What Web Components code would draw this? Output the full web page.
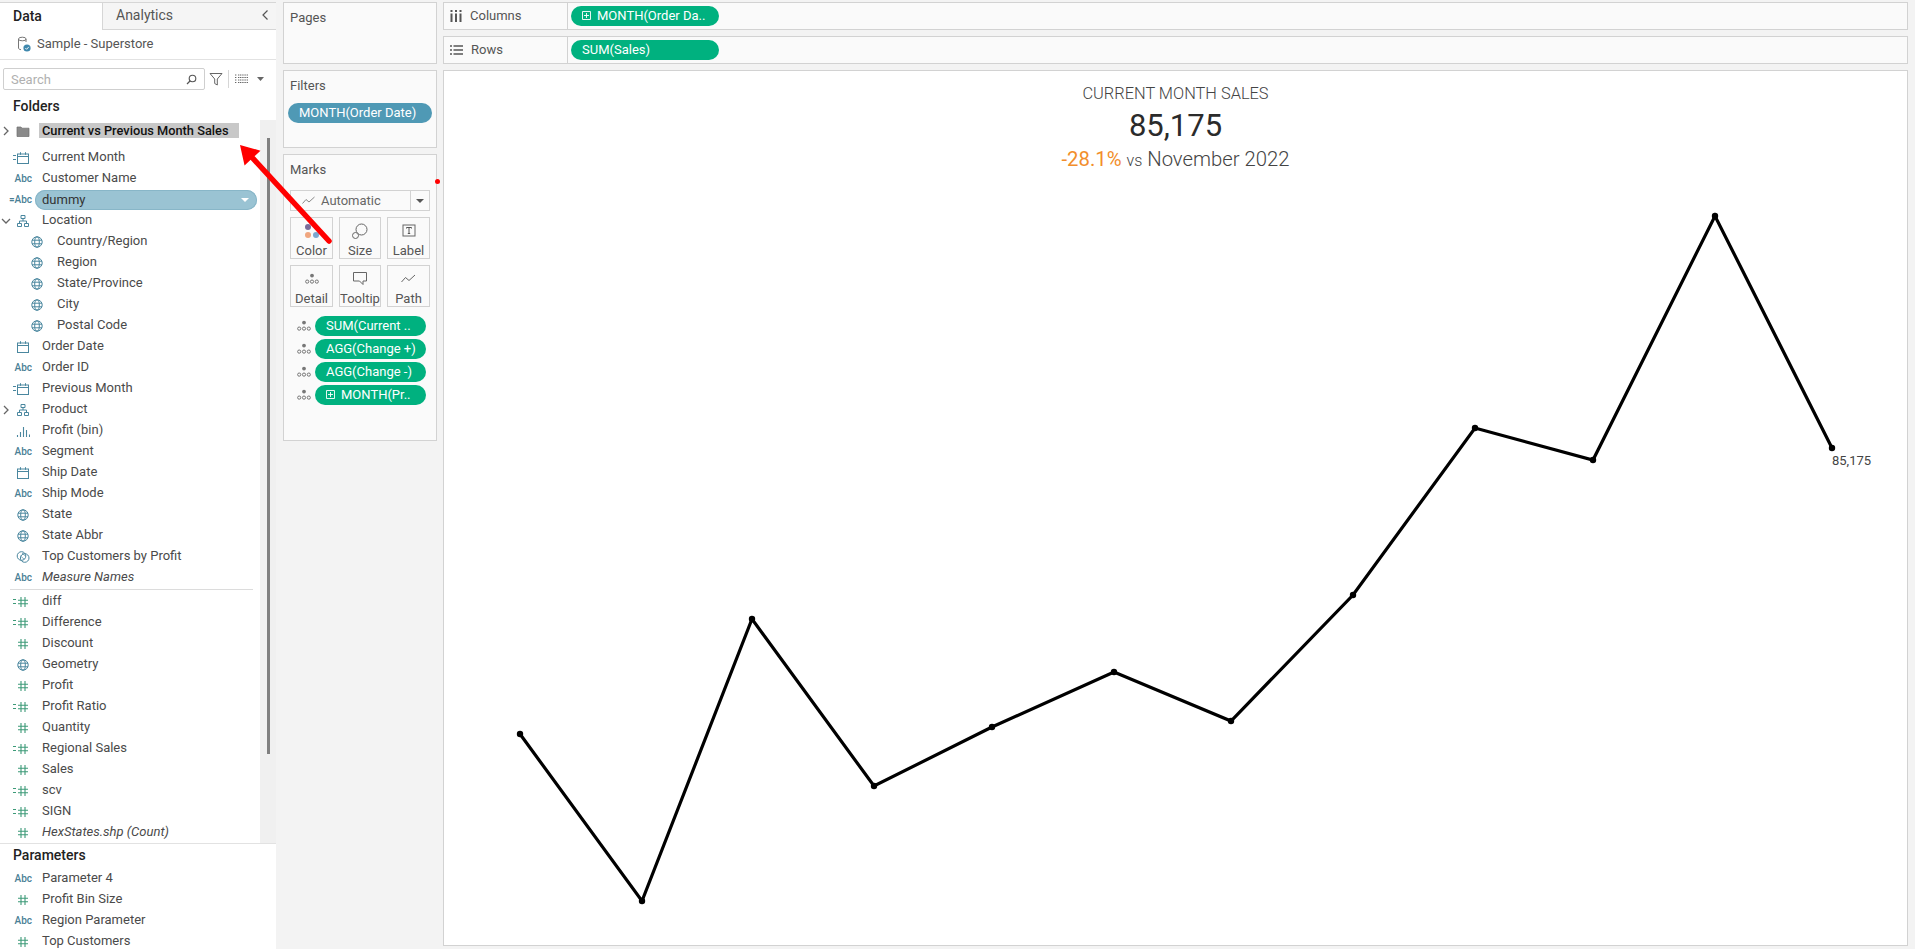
<!DOCTYPE html>
<html>
<head>
<meta charset="utf-8">
<title>Current Month Sales</title>
<style>
  html, body { margin: 0; height: 949px; overflow: hidden; background: #f3f3f3; }
  body { font-family: Roboto, "Liberation Sans", sans-serif; font-size: 13px; color: #444; }
</style>
</head>
<body>
<tb-app>
  <data-pane slot="data">
    <field-row slot="folder" kind="folder" expander="closed" folder>Current vs Previous Month Sales</field-row>

    <field-row kind="calendar" calc>Current Month</field-row>
    <field-row kind="abc">Customer Name</field-row>
    <field-row kind="abc" calc pill>dummy</field-row>
    <field-row kind="hier" expander="open">Location</field-row>
    <field-row kind="globe" indent>Country/Region</field-row>
    <field-row kind="globe" indent>Region</field-row>
    <field-row kind="globe" indent>State/Province</field-row>
    <field-row kind="globe" indent>City</field-row>
    <field-row kind="globe" indent>Postal Code</field-row>
    <field-row kind="calendar">Order Date</field-row>
    <field-row kind="abc">Order ID</field-row>
    <field-row kind="calendar" calc>Previous Month</field-row>
    <field-row kind="hier" expander="closed">Product</field-row>
    <field-row kind="bars">Profit (bin)</field-row>
    <field-row kind="abc">Segment</field-row>
    <field-row kind="calendar">Ship Date</field-row>
    <field-row kind="abc">Ship Mode</field-row>
    <field-row kind="globe">State</field-row>
    <field-row kind="globe">State Abbr</field-row>
    <field-row kind="set">Top Customers by Profit</field-row>
    <field-row kind="abc" italic>Measure Names</field-row>
    <pane-rule></pane-rule>
    <field-row kind="hash" calc>diff</field-row>
    <field-row kind="hash" calc>Difference</field-row>
    <field-row kind="hash">Discount</field-row>
    <field-row kind="globe">Geometry</field-row>
    <field-row kind="hash">Profit</field-row>
    <field-row kind="hash" calc>Profit Ratio</field-row>
    <field-row kind="hash">Quantity</field-row>
    <field-row kind="hash" calc>Regional Sales</field-row>
    <field-row kind="hash">Sales</field-row>
    <field-row kind="hash" calc>scv</field-row>
    <field-row kind="hash" calc>SIGN</field-row>
    <field-row kind="hash" italic>HexStates.shp (Count)</field-row>

    <field-row slot="params" kind="abc">Parameter 4</field-row>
    <field-row slot="params" kind="hash">Profit Bin Size</field-row>
    <field-row slot="params" kind="abc">Region Parameter</field-row>
    <field-row slot="params" kind="hash">Top Customers</field-row>
  </data-pane>

  <shelf-card slot="cards" label="Pages" style="height:62px"></shelf-card>
  <shelf-card slot="cards" label="Filters" style="height:78px">
    <viz-pill color="blue" width="144">MONTH(Order Date)</viz-pill>
  </shelf-card>
  <marks-card slot="cards"></marks-card>

  <shelf-row slot="shelves" label="Columns" kind="columns">
    <viz-pill plus width="148">MONTH(Order Da..</viz-pill>
  </shelf-row>
  <shelf-row slot="shelves" label="Rows" kind="rows">
    <viz-pill width="148">SUM(Sales)</viz-pill>
  </shelf-row>
  <viz-canvas slot="shelves"></viz-canvas>
</tb-app>

<script>
// shared glyphs for the data pane and marks card, all on a 14x14 box
const GLYPHS = {
  calendar: `<rect x="1.5" y="3" width="11" height="9.5" fill="none" stroke="currentColor"/><path d="M1.5 5.5h11M4.5 1.2v2.6M9.5 1.2v2.6" fill="none" stroke="currentColor"/>`,
  globe: `<circle cx="7" cy="7" r="5.2" fill="none" stroke="currentColor"/><ellipse cx="7" cy="7" rx="2.3" ry="5.2" fill="none" stroke="currentColor"/><path d="M2 5.2h10M2 8.8h10" fill="none" stroke="currentColor"/>`,
  hash: `<path d="M5 2v10M9 2v10M2 5.2h10M2 8.8h10" fill="none" stroke="currentColor" stroke-width="1.1"/>`,
  hier: `<path d="M5 1.5h4v3H5zM1.5 9.5h4v3h-4zM8.5 9.5h4v3h-4zM7 4.5v2.5M3.5 9.5V7h7v2.5" fill="none" stroke="currentColor"/>`,
  bars: `<path d="M1.5 11v2M4.5 8v5M7.5 3v10M10.5 6v7M13.5 10.5v2.5" fill="none" stroke="currentColor" stroke-width="1.1"/>`,
  set: `<circle cx="5.5" cy="6" r="4.3" fill="none" stroke="currentColor"/><circle cx="8.7" cy="8" r="4.3" fill="none" stroke="currentColor"/><path d="M6 3l3.5 3M4.5 6l4 3.5" fill="none" stroke="currentColor" stroke-width=".7"/>`,
  folder: `<path d="M1 3h4l1 1.2h7V12.5H1z" fill="#8a8a8a" stroke="#6e6e6e" stroke-width=".7"/>`,
  detail: `<circle cx="7" cy="3.6" r="1.9" fill="#777"/><g fill="none" stroke="#777"><circle cx="2.2" cy="9.6" r="1.6"/><circle cx="7" cy="9.6" r="1.6"/><circle cx="11.8" cy="9.6" r="1.6"/></g>`
};

function glyph(name, size = 14) {
  return `<svg width="${size}" height="${size}" viewBox="0 0 14 14" style="display:block;flex:none">${GLYPHS[name]}</svg>`;
}

class FieldRow extends HTMLElement {
  constructor() {
    super();
    this.attachShadow({ mode: "open" });
  }

  connectedCallback() {
    this._render();
  }

  _icon() {
    const kind = this.getAttribute("kind");
    const calc = this.hasAttribute("calc");
    if (kind === "abc") return `<span class="abc">${calc ? "=" : ""}Abc</span>`;
    const eq = calc ? `<span class="eq"></span>` : "";
    return eq + glyph(kind);
  }

  _chevron() {
    const state = this.getAttribute("expander");
    if (state === "closed") return `<svg width="8" height="10" viewBox="0 0 8 10"><path d="M2 1l4 4-4 4" fill="none" stroke="#666" stroke-width="1.3"/></svg>`;
    if (state === "open") return `<svg width="10" height="8" viewBox="0 0 10 8"><path d="M1 2l4 4 4-4" fill="none" stroke="#666" stroke-width="1.3"/></svg>`;
    return "";
  }

  _render() {
    const kind = this.getAttribute("kind");
    const measure = kind === "hash";
    this.shadowRoot.innerHTML = `
      <style>
        :host {
          display: flex;
          align-items: center;
          height: 21px;
          padding-right: 3px;
          color: #4a4a4a;
        }
        :host([indent]) { padding-left: 15px; }
        :host([folder]) { margin-bottom: 6px; padding-right: 21px; }
        .exp {
          flex: 0 0 14px;
          display: flex;
          justify-content: center;
          margin-left: -1px;
        }
        :host([indent]) .exp { display: block; flex-basis: 13px; }
        .icon {
          flex: 0 0 19px;
          min-width: 0;
          display: flex;
          align-items: center;
          justify-content: flex-end;
          color: ${measure ? "#3d9a78" : "#4a879f"};
          padding-right: 2px;
          box-sizing: border-box;
        }
        :host([folder]) .icon { color: #777; }
        .abc {
          font: 500 10px Roboto, sans-serif;
          color: #4a7f96;
          white-space: nowrap;
          flex: none;
          transform: translateX(2px);
        }
        .eq {
          width: 3px;
          height: 3px;
          flex: none;
          border-top: 1px solid currentColor;
          border-bottom: 1px solid currentColor;
        }
        .name {
          flex: 1;
          margin-left: 10px;
          white-space: nowrap;
          line-height: 18px;
          padding-bottom: 2px;
        }
        :host([indent]) .name { margin-left: 11px; }
        :host([italic]) .name { font-style: italic; }
        :host([folder]) .name {
          background: #c8c8c8;
          color: #111;
          font-size: 12.8px;
          font-weight: 500;
          line-height: 15px;
          padding: 0 0 0 3px;
          margin-left: 7px;
        }
        :host([pill]) .name {
          display: flex;
          justify-content: space-between;
          align-items: center;
          box-sizing: border-box;
          height: 20px;
          margin-left: 3px;
          padding: 0 7px;
          border-radius: 10px;
          background: #9ac3d3;
          box-shadow: inset 0 0 0 1px #88b6c8;
          color: #333;
        }
        .drop {
          width: 0;
          height: 0;
          border: 4px solid transparent;
          border-top: 4px solid #fff;
          border-bottom: 0;
          margin-right: 1px;
        }
      </style>
      <span class="exp">${this._chevron()}</span>
      <span class="icon">${this._icon()}</span>
      <span class="name"><slot></slot>${this.hasAttribute("pill") ? `<span class="drop"></span>` : ""}</span>
    `;
  }
}
customElements.define("field-row", FieldRow);

class PaneRule extends HTMLElement {
  constructor() {
    super();
    this.attachShadow({ mode: "open" });
    this.shadowRoot.innerHTML = `
      <style>
        :host { display: block; height: 3px; padding: 1px 7px 0 10px; box-sizing: border-box; }
        div { height: 1px; background: #dcdcdc; }
      </style>
      <div></div>
    `;
  }
}
customElements.define("pane-rule", PaneRule);

class DataPane extends HTMLElement {
  constructor() {
    super();
    this.attachShadow({ mode: "open" });
    this.shadowRoot.innerHTML = `
      <style>
        :host {
          display: flex;
          flex-direction: column;
          width: 276px;
          flex: none;
          height: 947px;
          background: #fff;
          border-top: 1px solid #d6d6d6;
          box-sizing: border-box;
          overflow: hidden;
        }
        .tabs { display: flex; height: 27px; flex: none; font-size: 14px; }
        .tab { display: flex; align-items: center; padding: 0 0 2px 13px; box-sizing: border-box; }
        .tab.on { width: 102px; font-weight: 500; color: #222; }
        .tab.off {
          flex: 1;
          background: #f5f5f5;
          border-left: 1px solid #d6d6d6;
          border-bottom: 1px solid #d6d6d6;
          justify-content: space-between;
          color: #555;
          padding-right: 7px;
        }
        .source {
          display: flex;
          align-items: center;
          gap: 6px;
          height: 30px;
          flex: none;
          padding: 0 0 2px 17px;
          border-bottom: 1px solid #e2e2e2;
          box-sizing: border-box;
          color: #555;
        }
        .search {
          display: flex;
          align-items: center;
          height: 22px;
          flex: none;
          margin-top: 8px;
          padding-left: 3px;
        }
        .box {
          width: 202px;
          height: 22px;
          box-sizing: border-box;
          border: 1px solid #cfcfcf;
          border-radius: 2px;
          display: flex;
          align-items: center;
          justify-content: space-between;
          padding: 0 7px;
          color: #b0b0b0;
        }
        .sep { width: 1px; height: 18px; background: #d6d6d6; margin: 0 6px 0 5px; }
        h3 {
          margin: 0;
          font-size: 14px;
          font-weight: 500;
          color: #222;
          padding-left: 13px;
          flex: none;
        }
        .folders { height: 30px; line-height: 28px; }
        .list { display: flex; height: 723px; flex: none; }
        .rows { width: 260px; flex: none; }
        .track { flex: 1; background: #f0f0f0; padding: 18px 0 0 7px; box-sizing: border-box; }
        .thumb { width: 3px; height: 616px; background: #808080; }
        .params {
          flex: none;
          border-top: 1px solid #e2e2e2;
        }
        .params h3 { height: 24px; line-height: 22px; }
        .params .rows { width: auto; }
      </style>
      <div class="tabs">
        <div class="tab on">Data</div>
        <div class="tab off">Analytics
          <svg width="8" height="12" viewBox="0 0 8 12"><path d="M6.5 1.5L2 6l4.5 4.5" fill="none" stroke="#555" stroke-width="1.2"/></svg>
        </div>
      </div>
      <div class="source">
        <svg width="14" height="16" viewBox="0 0 14 16"><path d="M1.5 3v9c0 1 1.2 1.6 2.5 1.6M9 3v3" fill="none" stroke="#777"/><ellipse cx="5.3" cy="3" rx="3.8" ry="1.8" fill="none" stroke="#777"/><circle cx="10" cy="12" r="3.6" fill="#3f88ad"/><path d="M8.3 12l1.3 1.3 2.2-2.4" fill="none" stroke="#fff" stroke-width=".9"/></svg>
        Sample - Superstore
      </div>
      <div class="search">
        <div class="box">Search
          <svg width="11" height="11" viewBox="0 0 11 11"><circle cx="6.5" cy="4.5" r="3.3" fill="none" stroke="#555" stroke-width="1.1"/><path d="M4 7L1 10" stroke="#555" stroke-width="1.3"/></svg>
        </div>
        <svg width="14" height="14" viewBox="0 0 14 14" style="margin-left:4px"><path d="M1 1.5h12L8.3 7v6L5.7 11.5V7z" fill="none" stroke="#666"/></svg>
        <span class="sep"></span>
        <svg width="13" height="10" viewBox="0 0 13 10"><path d="M0 1h2M3 1h10M0 3.5h2M3 3.5h10M0 6h2M3 6h10M0 8.5h2M3 8.5h10" stroke="#666" stroke-dasharray="1.2 .6"/></svg>
        <svg width="7" height="4" viewBox="0 0 7 4" style="margin-left:9px"><path d="M0 0h7L3.5 4z" fill="#666"/></svg>
      </div>
      <h3 class="folders" style="margin-top:2px">Folders</h3>
      <div class="list" style="margin-top:-2px">
        <div class="rows">
          <slot name="folder"></slot>
          <slot></slot>
        </div>
        <div class="track"><div class="thumb"></div></div>
      </div>
      <div class="params">
        <h3>Parameters</h3>
        <div class="rows"><slot name="params"></slot></div>
      </div>
    `;
  }
}
customElements.define("data-pane", DataPane);

class VizPill extends HTMLElement {
  constructor() {
    super();
    this.attachShadow({ mode: "open" });
  }

  connectedCallback() {
    const bg = this.getAttribute("color") === "blue" ? "#4f99b5" : "#00b17f";
    const plus = this.hasAttribute("plus")
      ? `<svg width="9" height="9" viewBox="0 0 9 9" style="flex:none;margin-right:6px"><path d="M.5.5h8v8h-8zM4.5 2v5M2 4.5h5" fill="none" stroke="#fff" stroke-width=".9"/></svg>`
      : "";
    this.shadowRoot.innerHTML = `
      <style>
        :host {
          display: flex;
          align-items: center;
          box-sizing: border-box;
          width: ${this.getAttribute("width") || 111}px;
          height: 20px;
          flex: none;
          padding: 0 0 1px 11px;
          border-radius: 10px;
          background: ${bg};
          color: #fff;
          font-size: 13px;
          white-space: nowrap;
          overflow: hidden;
        }
      </style>
      ${plus}<slot></slot>
    `;
  }
}
customElements.define("viz-pill", VizPill);

class ShelfCard extends HTMLElement {
  constructor() {
    super();
    this.attachShadow({ mode: "open" });
  }

  connectedCallback() {
    this.shadowRoot.innerHTML = `
      <style>
        :host {
          display: block;
          box-sizing: border-box;
          background: #fafafa;
          border: 1px solid #d2d2d2;
          flex: none;
        }
        .title { height: 16px; line-height: 16px; margin: 7px 0 9px 6px; color: #555; }
        .body { padding: 0 4px; }
      </style>
      <div class="title">${this.getAttribute("label")}</div>
      <div class="body"><slot></slot></div>
    `;
  }
}
customElements.define("shelf-card", ShelfCard);

class MarkButton extends HTMLElement {
  constructor() {
    super();
    this.attachShadow({ mode: "open" });
    this.shadowRoot.innerHTML = `
      <style>
        :host {
          display: flex;
          flex-direction: column;
          align-items: center;
          box-sizing: border-box;
          height: 42px;
          border: 1px solid #d2d2d2;
          color: #555;
          overflow: hidden;
        }
        .art { height: 25px; display: flex; align-items: center; justify-content: center; flex: none; }
        .text { line-height: 16px; }
      </style>
      <div class="art"><slot name="art"></slot></div>
      <div class="text"><slot></slot></div>
    `;
  }
}
customElements.define("mark-button", MarkButton);

class MarksCard extends HTMLElement {
  constructor() {
    super();
    this.attachShadow({ mode: "open" });
    this.shadowRoot.innerHTML = `
      <style>
        :host {
          display: block;
          position: relative;
          box-sizing: border-box;
          height: 287px;
          flex: none;
          background: #fafafa;
          border: 1px solid #d2d2d2;
        }
        .title { height: 16px; line-height: 16px; margin: 7px 0 12px 6px; color: #555; }
        .type {
          display: flex;
          align-items: center;
          box-sizing: border-box;
          height: 21px;
          margin: 0 6px;
          border: 1px solid #d2d2d2;
          color: #666;
        }
        .type .l { flex: 1; display: flex; align-items: center; gap: 6px; padding-left: 11px; }
        .type .r { width: 18px; height: 100%; border-left: 1px solid #d2d2d2; display: flex; align-items: center; justify-content: center; }
        .grid {
          display: grid;
          grid-template-columns: 43px 42px 43px;
          gap: 6px;
          margin: 6px 6px 0;
        }
        .rows { display: flex; flex-direction: column; gap: 3px; margin: 9px 0 0 13px; }
        .row { display: flex; align-items: center; gap: 4px; }
        .dot {
          position: absolute;
          right: -4px;
          top: 24px;
          width: 5px;
          height: 5px;
          border-radius: 50%;
          background: #f00;
        }
      </style>
      <div class="title">Marks</div>
      <div class="type">
        <div class="l">
          <svg width="13" height="9" viewBox="0 0 13 9"><path d="M.5 7.5L4 3.5l3 2.5L12.5 1" fill="none" stroke="#888"/></svg>
          Automatic
        </div>
        <div class="r"><svg width="8" height="4" viewBox="0 0 8 4"><path d="M0 0h8L4 4z" fill="#555"/></svg></div>
      </div>
      <div class="grid">
        <mark-button>
          <svg slot="art" width="20" height="18" viewBox="0 0 20 18"><circle cx="6" cy="5" r="3" fill="#7b6b99"/><circle cx="6" cy="13" r="3" fill="#f0a67f"/><circle cx="14" cy="13" r="3" fill="#7ba7cf"/></svg>
          Color
        </mark-button>
        <mark-button>
          <svg slot="art" width="18" height="18" viewBox="0 0 18 18"><circle cx="10.5" cy="7.5" r="5.5" fill="none" stroke="#666"/><circle cx="4.5" cy="13.5" r="3" fill="#fafafa" stroke="#666"/></svg>
          Size
        </mark-button>
        <mark-button>
          <svg slot="art" width="14" height="14" viewBox="0 0 14 14"><rect x="1" y="1" width="12" height="11" fill="none" stroke="#666"/><path d="M4.5 4.5v-1h5v1M7 3.5v6M5.8 9.5h2.4" fill="none" stroke="#555"/></svg>
          Label
        </mark-button>
        <mark-button>
          <span slot="art">${glyph("detail")}</span>
          Detail
        </mark-button>
        <mark-button>
          <svg slot="art" width="16" height="15" viewBox="0 0 16 15"><path d="M1.5 1.5h13v8.5h-3.5v3.5L7.5 10h-6z" fill="none" stroke="#666"/></svg>
          Tooltip
        </mark-button>
        <mark-button>
          <svg slot="art" width="15" height="10" viewBox="0 0 15 10"><path d="M.5 8L4.5 3.5l3.5 3L14 1" fill="none" stroke="#666"/></svg>
          Path
        </mark-button>
      </div>
      <div class="rows">
        <div class="row">${glyph("detail")}<viz-pill>SUM(Current ..</viz-pill></div>
        <div class="row">${glyph("detail")}<viz-pill>AGG(Change +)</viz-pill></div>
        <div class="row">${glyph("detail")}<viz-pill>AGG(Change -)</viz-pill></div>
        <div class="row">${glyph("detail")}<viz-pill plus>MONTH(Pr..</viz-pill></div>
      </div>
      <span class="dot"></span>
    `;
  }
}
customElements.define("marks-card", MarksCard);

class ShelfRow extends HTMLElement {
  constructor() {
    super();
    this.attachShadow({ mode: "open" });
  }

  connectedCallback() {
    const art = this.getAttribute("kind") === "columns"
      ? `<svg width="12" height="12" viewBox="0 0 12 12"><path d="M1.5 0v2M6 0v2M10.5 0v2M1.5 3.5V12M6 3.5V12M10.5 3.5V12" stroke="#555" stroke-width="2"/></svg>`
      : `<svg width="13" height="10" viewBox="0 0 13 10"><path d="M0 1h2M0 5h2M0 9h2M3.5 1H13M3.5 5H13M3.5 9H13" stroke="#555" stroke-width="1.6"/></svg>`;
    this.shadowRoot.innerHTML = `
      <style>
        :host {
          display: flex;
          align-items: center;
          box-sizing: border-box;
          height: 28px;
          flex: none;
          background: #fafafa;
          border: 1px solid #d2d2d2;
        }
        .head {
          display: flex;
          align-items: center;
          gap: 8px;
          box-sizing: border-box;
          width: 124px;
          height: 100%;
          padding: 0 0 1px 6px;
          border-right: 1px solid #d2d2d2;
          color: #555;
        }
        .pills { padding-left: 3px; }
      </style>
      <div class="head">${art}${this.getAttribute("label")}</div>
      <div class="pills"><slot></slot></div>
    `;
  }
}
customElements.define("shelf-row", ShelfRow);

class VizCanvas extends HTMLElement {
  constructor() {
    super();
    this.attachShadow({ mode: "open" });
    // points read off the reference, in page coordinates
    const pts = [[520,734],[642,901],[752,619],[874,786],[992,727],[1114,672],[1231,721],[1353,595],[1475,428],[1593,460],[1715,216],[1832,448]];
    this.shadowRoot.innerHTML = `
      <style>
        :host {
          display: block;
          position: relative;
          box-sizing: border-box;
          height: 876px;
          flex: none;
          background: #fff;
          border: 1px solid #d2d2d2;
          text-align: center;
          color: #444;
          padding-top: 14px;
        }
        .t1 { font-size: 16.4px; font-weight: 300; line-height: 18px; color: #444; }
        .t2 { font-size: 31px; line-height: 40px; margin-top: 3px; color: #2b2b2b; }
        .t3 { font-size: 20.3px; font-weight: 300; line-height: 24px; margin-top: 1px; }
        .t3 b { font-weight: 400; color: #f28e2b; }
        .t3 small { font-size: 16px; }
        svg { position: absolute; left: 0; top: 0; }
        text { font: 13px Roboto, sans-serif; fill: #444; }
      </style>
      <div class="t1">CURRENT MONTH SALES</div>
      <div class="t2">85,175</div>
      <div class="t3"><b>-28.1%</b> <small>vs</small> November 2022</div>
      <svg width="1464" height="874" viewBox="444 71 1464 874">
        <polyline points="${pts.join(" ")}" fill="none" stroke="#000" stroke-width="3.2"/>
        ${pts.map(p => `<circle cx="${p[0]}" cy="${p[1]}" r="3.2" fill="#000"/>`).join("")}
        <text x="1832" y="465">85,175</text>
      </svg>
    `;
  }
}
customElements.define("viz-canvas", VizCanvas);

class TbApp extends HTMLElement {
  constructor() {
    super();
    this.attachShadow({ mode: "open" });
    this.shadowRoot.innerHTML = `
      <style>
        :host { display: flex; height: 949px; padding-top: 2px; box-sizing: border-box; position: relative; }
        .cards { display: flex; flex-direction: column; gap: 6px; width: 154px; margin: 0 6px 0 7px; flex: none; }
        .shelves { display: flex; flex-direction: column; gap: 6px; width: 1465px; flex: none; }
        .arrow { position: absolute; left: 0; top: 0; pointer-events: none; }
      </style>
      <slot name="data"></slot>
      <div class="cards"><slot name="cards"></slot></div>
      <div class="shelves"><slot name="shelves"></slot></div>
      <svg class="arrow" width="400" height="300">
        <path d="M329 241L248 153" stroke="#f00" stroke-width="5.5" stroke-linecap="round"/>
        <path d="M241 146L245 164L259 151z" fill="#f00" stroke="#f00" stroke-width="1.5"/>
      </svg>
    `;
  }
}
customElements.define("tb-app", TbApp);
</script>
</body>
</html>
